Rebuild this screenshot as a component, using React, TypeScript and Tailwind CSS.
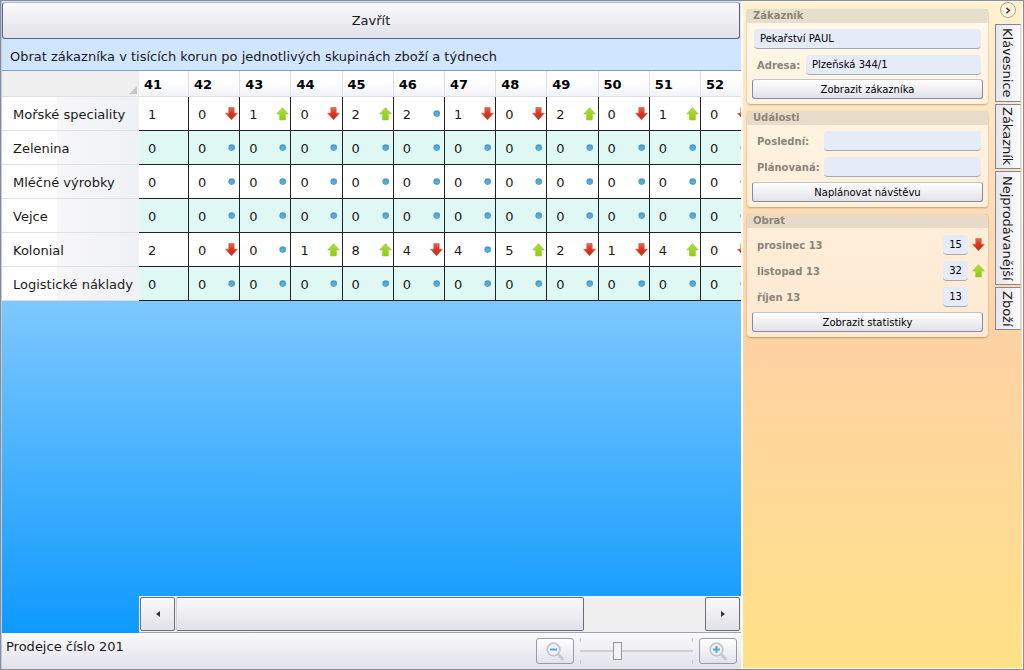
import React, { useState } from 'react';

type Trend = 'up' | 'down' | 'same' | 'none';

const WEEKS = ['41', '42', '43', '44', '45', '46', '47', '48', '49', '50', '51', '52'];

const ROWS = [
  { name: 'Mořské speciality', values: [1, 0, 1, 0, 2, 2, 1, 0, 2, 0, 1, 0] },
  { name: 'Zelenina', values: [0, 0, 0, 0, 0, 0, 0, 0, 0, 0, 0, 0] },
  { name: 'Mléčné výrobky', values: [0, 0, 0, 0, 0, 0, 0, 0, 0, 0, 0, 0] },
  { name: 'Vejce', values: [0, 0, 0, 0, 0, 0, 0, 0, 0, 0, 0, 0] },
  { name: 'Kolonial', values: [2, 0, 0, 1, 8, 4, 4, 5, 2, 1, 4, 0] },
  { name: 'Logistické náklady', values: [0, 0, 0, 0, 0, 0, 0, 0, 0, 0, 0, 0] },
];

const TURNOVER: { month: string; value: string; trend: Trend }[] = [
  { month: 'prosinec 13', value: '15', trend: 'down' },
  { month: 'listopad 13', value: '32', trend: 'up' },
  { month: 'říjen 13', value: '13', trend: 'none' },
];

const TABS = [
  { name: 'Klávesnice', height: 'h-[78px]' },
  { name: 'Zákazník', height: 'h-[65px]' },
  { name: 'Nejprodávanější', height: 'h-[114px]' },
  { name: 'Zboží', height: 'h-[43px]' },
];

// compared with the previous week, the first one has nothing to compare to
const getTrend = (values: number[], i: number): Trend => {
  if (i === 0) return 'none';
  if (values[i] > values[i - 1]) return 'up';
  if (values[i] < values[i - 1]) return 'down';
  return 'same';
};

const TrendIcon: React.FC<{ trend: Trend }> = ({ trend }) => {
  if (trend === 'none') return <span className="w-[13px] shrink-0" />;
  return (
    <svg width="13" height="14" viewBox="0 0 13 14" className="shrink-0">
      <defs>
        <linearGradient id="red" x1="0" y1="0" x2="0" y2="1">
          <stop offset="0" stopColor="#ea6a58" />
          <stop offset="0.4" stopColor="#dc3a22" />
          <stop offset="1" stopColor="#c62a12" />
        </linearGradient>
        <linearGradient id="green" x1="0" y1="0" x2="0" y2="1">
          <stop offset="0" stopColor="#b0de3c" />
          <stop offset="1" stopColor="#8fcb10" />
        </linearGradient>
      </defs>
      {trend === 'down' && (
        <path d="M3.8 0.6H9.2V6.2H12.4L6.5 12.8L0.6 6.2H3.8Z" fill="url(#red)" stroke="#cf5540" strokeWidth="0.6" />
      )}
      {trend === 'up' && (
        <path d="M6.5 0.6L12.4 7H9.4V13H3.6V7H0.6Z" fill="url(#green)" stroke="#9ccb45" strokeWidth="0.6" />
      )}
      {trend === 'same' && (
        <>
          <circle cx="6.7" cy="6.6" r="3.3" fill="#4d9dc8" />
          <circle cx="6.7" cy="7.2" r="2" fill="#5cacd6" />
        </>
      )}
    </svg>
  );
};

const Magnifier: React.FC<{ plus?: boolean }> = ({ plus }) => (
  <svg width="18" height="19" viewBox="0 0 18 19">
    <path d="M12 12L16.3 17" stroke="#cbcbcf" strokeWidth="3" strokeLinecap="round" />
    <circle cx="7.5" cy="7.5" r="6.3" fill="#eef5fa" stroke="#c3c5c9" strokeWidth="1.8" />
    <path d="M4 7.5H11" stroke="#5aa4d8" strokeWidth="2" />
    {plus && <path d="M7.5 4V11" stroke="#5aa4d8" strokeWidth="2" />}
  </svg>
);

const Group: React.FC<{ title: string; children: React.ReactNode }> = ({ title, children }) => (
  <section className="rounded-sm bg-white/50 pb-[5px] shadow-[0_1px_2px_rgba(120,80,20,0.45)]">
    <h2 className="h-[14px] bg-[#d0c6b4]/50 px-1.5 text-[10px] leading-[14px] font-bold text-[#8c8578]">{title}</h2>
    {children}
  </section>
);

const PanelButton: React.FC<{ children: React.ReactNode }> = ({ children }) => (
  <button className="mx-[5px] flex h-5 w-[calc(100%-10px)] items-center justify-center rounded-[3px] border border-[#8a8a98] border-t-[#c4c4cc] bg-linear-to-b from-white to-[#e1e1ea] text-[10px] text-black">
    {children}
  </button>
);

const Ticks: React.FC = () => (
  <div className="flex h-1 justify-between">
    <span className="w-px bg-[#d0d0d6]" />
    <span className="w-px bg-[#d0d0d6]" />
  </div>
);

const FIELD = 'h-5 min-w-0 rounded-sm border-b border-[#a5a7b5] bg-[#e6ebf8] text-[10px] text-black outline-none';

const App: React.FC = () => {
  const [zoom, setZoom] = useState(32);

  return (
    <div className="flex h-screen overflow-hidden border border-[#8b8d93] bg-white font-['Verdana','DejaVu_Sans',sans-serif] text-[#1a1a1a]">
      <main className="flex min-w-0 flex-1 flex-col border-l border-[#b9cbe4] bg-[#d0e5ff]">
        <div className="py-px pr-px">
          <button className="h-[37px] w-full rounded-[3px] border border-[#62627a] border-t-[#b8b8c0] bg-linear-to-b from-[#fafafc] to-[#e1e1ea] text-[13px]">
            Zavřít
          </button>
        </div>
        <h1 className="flex h-[31px] items-center border-b border-[#7f9fcb] pt-1 pl-2 text-[13px]">
          Obrat zákazníka v tisících korun po jednotlivých skupinách zboží a týdnech
        </h1>

        <div className="flex min-h-0 flex-1 flex-col bg-linear-to-b/srgb from-[#d0e8ff] from-0% via-[#7ec8ff] via-[41%] to-[#0d9aff]">
          <table className="w-full table-fixed border-separate border-spacing-0 text-[13px]">
            <colgroup>
              <col className="w-[137px]" />
              <col className="w-[50px]" />
              {WEEKS.slice(2).map((week) => (
                <col key={week} />
              ))}
              <col className="w-[40px]" />
            </colgroup>
            <thead>
              <tr className="h-[26px]">
                <th className="relative border-b border-[#dcdfe5] bg-[#efefef] p-0">
                  <svg width="8" height="8" viewBox="0 0 8 8" className="absolute right-0.5 bottom-0.5">
                    <path d="M8 0V8H0Z" fill="#c8c8c8" />
                  </svg>
                </th>
                {WEEKS.map((week) => (
                  <th
                    key={week}
                    scope="col"
                    className="border-r border-b border-[#dcdfe5] bg-linear-to-b from-white from-40% to-[#f2f3f6] p-0 pt-0.5 pl-[5px] text-left font-bold text-black last:border-r-0"
                  >
                    {week}
                  </th>
                ))}
              </tr>
            </thead>
            <tbody>
              {ROWS.map((row) => (
                <tr key={row.name} className="h-[34px] bg-white even:bg-[#dff8f4]">
                  <th
                    scope="row"
                    className="border-b border-[#dcdfe5] bg-linear-to-r from-white from-40% via-[#f7f7f9] via-40% to-[#f0f1f4] p-0 pt-0.5 pl-[11px] text-left font-normal whitespace-nowrap"
                  >
                    {row.name}
                  </th>
                  {row.values.map((value, i) => (
                    <td key={WEEKS[i]} className="overflow-hidden border-r border-b border-[#222] p-0 last:border-r-0">
                      <div className="flex items-center pl-[9px]">
                        <span className="w-[27px] shrink-0 pt-0.5">{value}</span>
                        <TrendIcon trend={getTrend(row.values, i)} />
                      </div>
                    </td>
                  ))}
                </tr>
              ))}
            </tbody>
          </table>

          <div className="mt-auto ml-[137px] flex h-[37px] border-b border-[#9aa5b5] bg-[#efefef] p-px">
            <button aria-label="Doleva" className="flex w-[35px] items-center justify-center rounded-xs border border-[#6d6f78] bg-linear-to-b from-[#fafafc] to-[#e1e1ea]">
              <svg width="4" height="6" viewBox="0 0 4 6"><path d="M4 0V6L0 3Z" fill="#333" /></svg>
            </button>
            <div className="flex flex-1">
              <div className="ml-px w-[77%] rounded-xs border border-[#6d6f78] border-l-[#d0d0d6] bg-linear-to-b from-[#fafafc] to-[#e1e1ea]" />
            </div>
            <button aria-label="Doprava" className="flex w-[35px] items-center justify-center rounded-xs border border-[#6d6f78] bg-linear-to-b from-[#fafafc] to-[#e1e1ea]">
              <svg width="4" height="6" viewBox="0 0 4 6"><path d="M0 0V6L4 3Z" fill="#333" /></svg>
            </button>
          </div>
        </div>

        <footer className="flex h-9 items-center justify-between bg-linear-to-b from-[#fafafc] to-[#e1e1ea] px-1 text-[13px]">
          <span className="self-start pt-1">Prodejce číslo 201</span>
          <div className="flex items-center gap-1.5">
            <button aria-label="Oddálit" className="flex h-[26px] w-[38px] items-center justify-center rounded-[3px] border border-[#9a9aa6] bg-linear-to-b from-white to-[#e1e1ea]">
              <Magnifier />
            </button>
            <div className="flex w-[113px] flex-col">
              <Ticks />
              <input
                type="range"
                aria-label="Přiblížení"
                value={zoom}
                onChange={(e) => setZoom(Number(e.target.value))}
                className="h-[18px] w-full appearance-none bg-transparent [&::-webkit-slider-runnable-track]:h-0.5 [&::-webkit-slider-runnable-track]:bg-[#cfcfd4] [&::-webkit-slider-thumb]:-mt-2 [&::-webkit-slider-thumb]:h-[18px] [&::-webkit-slider-thumb]:w-[9px] [&::-webkit-slider-thumb]:appearance-none [&::-webkit-slider-thumb]:border [&::-webkit-slider-thumb]:border-[#96969e] [&::-webkit-slider-thumb]:bg-[#f2f2f5]"
              />
              <Ticks />
            </div>
            <button aria-label="Přiblížit" className="flex h-[26px] w-[38px] items-center justify-center rounded-[3px] border border-[#9a9aa6] bg-linear-to-b from-white to-[#e1e1ea]">
              <Magnifier plus />
            </button>
          </div>
        </footer>
      </main>

      <aside className="flex w-[282px] shrink-0 border border-l-2 border-[#fffaf0] bg-linear-to-b/srgb from-[#fff1d2] from-0% via-[#fed2a4] via-50% to-[#fee187] pl-1">
        <div className="flex w-[241px] flex-col gap-[7px] pt-[7px]">
          <Group title="Zákazník">
            <div className="flex flex-col gap-1.5 px-[7px] pt-1.5 pb-1">
              <input aria-label="Zákazník" defaultValue="Pekařství PAUL" className={`${FIELD} px-1.5`} />
              <div className="flex items-center justify-between pl-[3px]">
                <label htmlFor="address" className="text-[10px] font-bold text-[#8a8478]">Adresa:</label>
                <input id="address" defaultValue="Plzeňská 344/1" className={`${FIELD} w-[175px] px-1.5`} />
              </div>
            </div>
            <PanelButton>Zobrazit zákazníka</PanelButton>
          </Group>

          <Group title="Události">
            <div className="flex flex-col gap-1.5 pt-1.5 pr-[7px] pb-[5px] pl-2.5">
              <div className="flex items-center justify-between">
                <label htmlFor="last" className="text-[10px] font-bold text-[#8a8478]">Poslední:</label>
                <input id="last" className={`${FIELD} w-[157px] px-1.5`} />
              </div>
              <div className="flex items-center justify-between">
                <label htmlFor="planned" className="text-[10px] font-bold text-[#8a8478]">Plánovaná:</label>
                <input id="planned" className={`${FIELD} w-[157px] px-1.5`} />
              </div>
            </div>
            <PanelButton>Naplánovat návštěvu</PanelButton>
          </Group>

          <Group title="Obrat">
            <div className="flex flex-col gap-1.5 pt-[7px] pr-[3px] pb-[5px] pl-2.5">
              {TURNOVER.map(({ month, value, trend }) => (
                <div key={month} className="flex items-center">
                  <label htmlFor={month} className="flex-1 text-[10px] font-bold text-[#8a8478]">{month}</label>
                  <input id={month} defaultValue={value} className={`${FIELD} mr-1 w-[25px] text-center`} />
                  <TrendIcon trend={trend} />
                </div>
              ))}
            </div>
            <PanelButton>Zobrazit statistiky</PanelButton>
          </Group>
        </div>

        <div className="ml-1.5 flex w-[27px] flex-col items-center gap-0.5">
          <button aria-label="Skrýt panel" className="mb-1 flex size-4 items-center justify-center rounded-full border border-[#b3a78f] bg-[#fff6e0]">
            <svg width="6" height="7" viewBox="0 0 6 7" fill="none" stroke="#444" strokeWidth="1.6">
              <path d="M1.5 0.8L4.3 3.5L1.5 6.2" />
            </svg>
          </button>
          {TABS.map(({ name, height }) => (
            <button
              key={name}
              className={`${height} flex w-[26px] items-center justify-center border border-[#85859a] border-r-[#d5d5dc] bg-linear-to-r from-[#e6e6ee] to-[#fbfbfd] text-[13px] [writing-mode:vertical-rl]`}
            >
              {name}
            </button>
          ))}
        </div>
      </aside>
    </div>
  );
};

export default App;
